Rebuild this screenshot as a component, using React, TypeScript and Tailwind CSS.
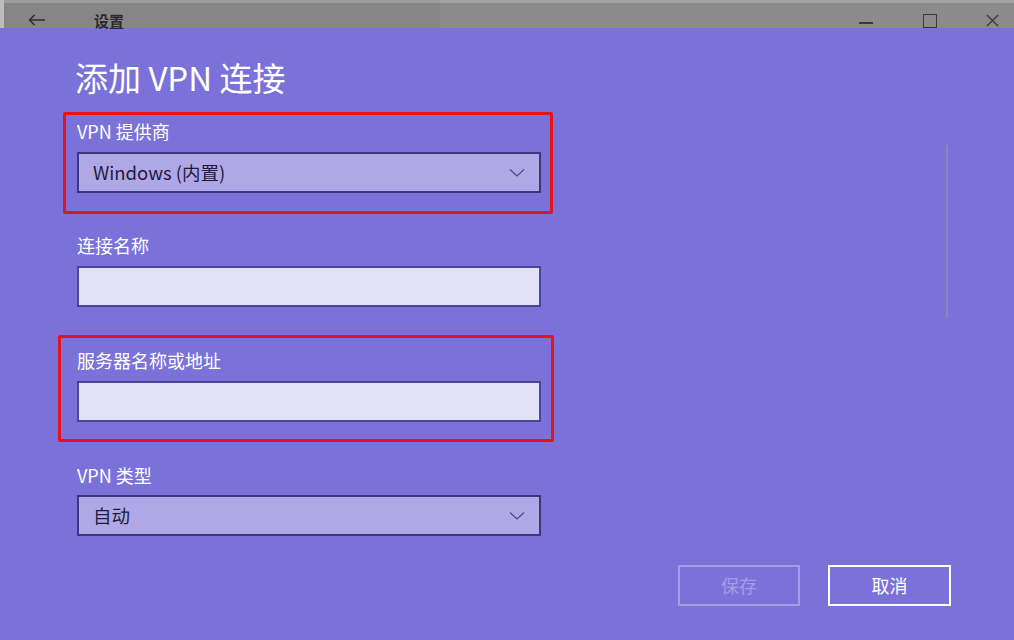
import React from "react";

const font = { fontFamily: '"Noto Sans CJK SC", "Noto Sans", sans-serif' };

function Chevron() {
  return (
    <svg width="16" height="10" viewBox="0 0 16 10" className="mr-[14px]">
      <path d="M1 1.5 L8 8 L15 1.5" fill="none" stroke="#4a4585" strokeWidth="1.1" />
    </svg>
  );
}

function Select({ value }: { value: string }) {
  return (
    <div className="w-[464px] h-[41px] bg-[#b0a8e6] border-2 border-[#3c3680] flex items-center justify-between">
      <span className="pl-[14px] text-[18.5px] text-[#1e1b3d]">{value}</span>
      <Chevron />
    </div>
  );
}

function Input() {
  return <div className="w-[464px] h-[41px] bg-[#e3e1f6] border-2 border-[#4a449a]" />;
}

function Label({ text, mt }: { text: string; mt: string }) {
  return <div className={`${mt} h-5 leading-5 text-[18px] text-white`}>{text}</div>;
}

export default function App() {
  return (
    <div className="relative w-[1014px] h-[640px] bg-[#7b72d9] overflow-hidden" style={font}>
      {/* title bar */}
      <div className="relative h-[28px] flex">
        <div className="w-[4px] bg-[#bdbdbd]" />
        <div className="w-[436px] bg-[#868686] border-t-[3px] border-[#9c9c9c] flex items-center">
          <svg width="18" height="12" viewBox="0 0 18 12" className="ml-[24px] mt-[9px]">
            <path d="M17 6 H2 M6.5 1 L1.5 6 L6.5 11" fill="none" stroke="#2a2a2a" strokeWidth="1.4" />
          </svg>
          <span className="ml-[48px] text-[15px] font-bold text-[#2a2a2a] leading-none mt-[9px]">设置</span>
        </div>
        <div className="flex-1 bg-[#8b8b8b] border-t-[3px] border-[#a3a3a3] flex items-center justify-end">
          <div className="w-[14px] h-[2px] bg-[#3a3a3a] mr-[50px] mt-[14px]" />
          <div className="w-[14px] h-[14px] border-[1.5px] border-[#3a3a3a] mr-[49px] mt-[10px]" />
          <svg width="13" height="13" viewBox="0 0 14 14" className="mr-[15px] mt-[10px]">
            <path d="M1 1 L13 13 M13 1 L1 13" stroke="#3a3a3a" strokeWidth="1.4" />
          </svg>
        </div>
      </div>

      {/* content */}
      <div className="pl-[77px] flex flex-col">
        <div className="mt-[27px] h-11 leading-[44px] text-[33px] text-white -ml-[2px]">添加 VPN 连接</div>
        <Label text="VPN 提供商" mt="mt-[22px]" />
        <div className="mt-[11px]"><Select value="Windows (内置)" /></div>
        <Label text="连接名称" mt="mt-[42px]" />
        <div className="mt-[11px]"><Input /></div>
        <Label text="服务器名称或地址" mt="mt-[43px]" />
        <div className="mt-[11px]"><Input /></div>
        <Label text="VPN 类型" mt="mt-[43px]" />
        <div className="mt-[10px]"><Select value="自动" /></div>
        <div className="mt-[29px] w-[874px] flex justify-end gap-[28px]">
          <div className="w-[122px] h-[41px] border-2 border-[#a49de6] flex items-center justify-center text-[18px] text-[#a49de6]">保存</div>
          <div className="w-[123px] h-[41px] border-2 border-white flex items-center justify-center text-[18px] text-white">取消</div>
        </div>
      </div>

      {/* scrollbar */}
      <div className="absolute left-[946px] top-[145px] w-[2px] h-[173px] bg-[#8a86b8]" />

      {/* red annotation boxes */}
      <div className="absolute left-[63px] top-[112px] w-[490px] h-[102px] border-[3px] border-[#e3141e] rounded-[2px]" />
      <div className="absolute left-[58px] top-[335px] w-[496px] h-[107px] border-[3px] border-[#e3141e] rounded-[2px]" />
    </div>
  );
}
